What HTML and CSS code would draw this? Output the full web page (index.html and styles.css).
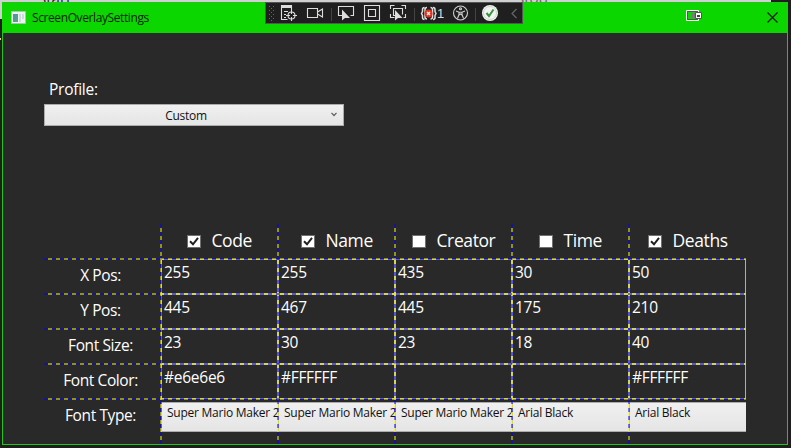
FILE: index.html
```
<!DOCTYPE html>
<html lang="en">
<head>
<meta charset="utf-8">
<title>ScreenOverlaySettings</title>
<link rel="stylesheet" href="styles.css">
</head>
<body>
<div class="behind"><span class="behind-start">Start</span><span class="behind-stop">Stop</span></div>
<main class="window">
  <header class="titlebar">
    <svg class="app-icon" width="15" height="13" viewBox="0 0 15 13"><defs><linearGradient id="ig" x2="1" y2="1"><stop stop-color="#4e8fb0"/><stop offset="1" stop-color="#58a77c"/></linearGradient></defs><path fill="#eef1f1" stroke="#a9c5b2" d="M.5.5h14v12H.5z"/><path fill="url(#ig)" d="M2 3h5v8H2z"/><path fill="#cbdcda" d="M8 3h2v8H8zM11 3h2v5h-2z"/></svg>
    <h1 class="title">ScreenOverlaySettings</h1>
    <svg class="battery" width="16" height="11" viewBox="0 0 16 11"><path fill="#0cd600" stroke="#fff" d="M.5.5h12v10H.5z"/><path fill="none" stroke="#555" d="M1.5 1.500h10v8h-10z"/><path fill="#777" d="M6 3h1v5H6zM8 3h1v5H8z"/><path fill="#fff" stroke="#555" d="M9.500 2.500h6v6h-6z"/><path fill="#444" d="M11 5h3v2h-3z"/></svg>
    <svg class="close" width="11" height="11" viewBox="0 0 11 11"><path stroke="#111" stroke-width="1.1" d="M.5.500l10 10M10.500.500l-10 10"/></svg>
  </header>
  <section class="content">
    <div class="profile">Profile:</div>
    <div class="select"><span>Custom</span><svg width="6" height="5" viewBox="0 0 6 5"><path fill="none" stroke="#606060" stroke-width="1.200" d="M.5.800L3 3.500 5.500.800"/></svg></div>
    <div class="grid">
      <div></div>
      <div class="head code"><i class="box"><svg viewBox="0 0 12 11"><path d="M2 5.300l3 3 5-6.500"/></svg></i><b>Code</b></div>
      <div class="head name"><i class="box"><svg viewBox="0 0 12 11"><path d="M2 5.300l3 3 5-6.500"/></svg></i><b>Name</b></div>
      <div class="head creator"><i class="box"></i><b>Creator</b></div>
      <div class="head time"><i class="box"></i><b>Time</b></div>
      <div class="head deaths"><i class="box"><svg viewBox="0 0 12 11"><path d="M2 5.300l3 3 5-6.500"/></svg></i><b>Deaths</b></div>
      <div class="label">X Pos:</div><div class="cell">255</div><div class="cell">255</div><div class="cell">435</div><div class="cell">30</div><div class="cell">50</div>
      <div class="label">Y Pos:</div><div class="cell">445</div><div class="cell">467</div><div class="cell">445</div><div class="cell">175</div><div class="cell">210</div>
      <div class="label">Font Size:</div><div class="cell">23</div><div class="cell">30</div><div class="cell">23</div><div class="cell">18</div><div class="cell">40</div>
      <div class="label">Font Color:</div><div class="cell">#e6e6e6</div><div class="cell hex">#FFFFFF</div><div class="cell"></div><div class="cell"></div><div class="cell hex">#FFFFFF</div>
      <div class="label">Font Type:</div><div class="combo">Super Mario Maker 2</div><div class="combo">Super Mario Maker 2</div><div class="combo">Super Mario Maker 2</div><div class="combo">Arial Black</div><div class="combo">Arial Black</div>
    </div>
  </section>
</main>
<nav class="tools">
<svg width="258" height="22" viewBox="265 2 258 22">
  <path fill="#666" d="M269 6h1v1h-1zM273 6h1v1h-1zM271 8h1v1h-1zM269 10h1v1h-1zM273 10h1v1h-1zM271 12h1v1h-1zM269 14h1v1h-1zM273 14h1v1h-1zM271 16h1v1h-1zM269 18h1v1h-1zM273 18h1v1h-1zM271 20h1v1h-1z"/>
  <g fill="none" stroke="#ddd" stroke-width="1.100">
    <path d="M281.500 8v11.500h6M291.500 8v2M284 11.500h4M284 14.500h2M284 17.500h2"/><path fill="#ddd" d="M281.500 5.500h10v2h-10z"/>
    <circle cx="291.500" cy="15.500" r="3.500"/><path d="M291.500 10v4M291.500 17v4M286 15.500h4M293 15.500h4"/>
    <path d="M307.500 8.500h10v9h-10zM317.500 12l5-3v8l-5-3"/>
    <path d="M342 15.500h-3.500v-9h15v9h-3"/>
    <path d="M364.500 5.500h15v15h-15zM368.500 9.500h7v7h-7z"/>
    <path d="M390.500 9V5.500h4M401.500 5.500h4V9M390.500 14v3.500h4M405.500 14v3.500h-2M396 15.500h-2.500v-7h9v6"/>
  </g>
  <path fill="#ddd" d="M342 9.500v11l3-2.500h5zM395 10v10.500l3-2.500h4.500z"/>
  <path stroke="#444" d="M331.500 8v13M414.500 8v13M475.500 8v13"/>
  <path fill="none" stroke="#ddd" stroke-width="1.500" d="M424.500 7.500q-2 0-2 2v2l-1 2 1 2v2q0 2 2 2M427 7.500q-2 0-2 2v7.500q0 2 2 2M430.500 7.500q2 0 2 2v7.500q0 2-2 2M433 7.500q2 0 2 2v2l1 2-1 2v2q0 2-2 2"/>
  <circle cx="428.500" cy="13.500" r="4" fill="#e5311d"/><path stroke="#fff" stroke-width="1.200" d="M427 12l3 3M430 12l-3 3"/>
  <text x="437" y="18" class="count">1</text>
  <g fill="none" stroke="#d0d0d0" stroke-width="1.100"><circle cx="460.500" cy="13" r="7"/><circle cx="460.500" cy="8.800" r="1"/><path d="M456 11l3 1.200h3l3-1.200M459 12v2.500l-1.500 4M462 12v2.500l1.500 4M459 15l1.500-1 1.500 1"/></g>
  <circle cx="490" cy="13" r="8" fill="#f3f3f3"/><circle cx="490" cy="13" r="6.500" fill="none" stroke="#b8d5ba" stroke-width=".8"/><path fill="none" stroke="#36963c" stroke-width="2" d="M486.500 13l2.500 3 4.500-6.500"/>
  <path fill="none" stroke="#666" stroke-width="1.200" d="M516.500 9l-4.500 4.500 4.500 4.500"/>
</svg>
</nav>
</body>
</html>
```

FILE: styles.css
```
* { box-sizing: border-box; }
body {
  margin: 0;
  width: 791px;
  height: 448px;
  overflow: hidden;
  padding: 2px 3px 3px 2px;
  background:
    linear-gradient(#d0d0d0, #d0d0d0) 0 0 / 771px 2px no-repeat,
    linear-gradient(#d0d0d0, #d0d0d0) 0 0 / 2px 19px no-repeat,
    linear-gradient(#f0d080, #f0d080) 0 38px / 1px 2px no-repeat,
    #1f1d1e;
  font-family: "Open Sans", "Noto Sans", sans-serif;
  color: #fff;
}
.behind {
  position: absolute;
  left: 0;
  top: 0;
  width: 791px;
  height: 2px;
  overflow: hidden;
  color: #222;
  font-size: 15px;
  line-height: 16px;
}
.behind span { position: absolute; top: -10px; }
.behind-start { left: 38px; }
.behind-stop { left: 516px; color: #666; }
.window {
  width: 786px;
  height: 443px;
  background: #292929;
  border: 1px solid #1fc71a;
}
.titlebar {
  height: 30px;
  margin: 0 -1px;
  padding-left: 9px;
  display: flex;
  align-items: center;
  background: #0cd600;
}
.app-icon { margin-top: -2px; }
.title {
  margin: -2px 0 0 6px;
  flex: 1;
  font-size: 12px;
  font-weight: 400;
  letter-spacing: -0.4px;
  color: #061a04;
}
.battery { margin: -5px 65px 0 0; }
.close { margin: -2px 10px 0 0; }
.content { padding: 45px 0 0 41px; }
.profile {
  height: 26px;
  padding-left: 5px;
  font-size: 15.5px;
  line-height: 22px;
  letter-spacing: -0.25px;
}
.select {
  width: 300px;
  height: 22px;
  padding: 0 6px 0 16px;
  display: flex;
  align-items: center;
  border: 1px solid #acacac;
  background: linear-gradient(#f0f0f0, #e5e5e5);
  color: #111;
  font-size: 12px;
  letter-spacing: -0.3px;
}
.select span { flex: 1; text-align: center; padding-top: 1px; padding-right: 20px; }
.select svg { margin-top: -2px; }
.grid {
  position: relative;
  width: 702px;
  margin-top: 98px;
  display: grid;
  grid-template-columns: repeat(6, 117px);
  grid-template-rows: repeat(5, 35px) 45px;
}
.grid::after {
  content: "";
  position: absolute;
  inset: 0;
  --dash: #0000ff80 0 4px, #ffff0080 4px 8px;
  --h: repeating-linear-gradient(90deg, var(--dash));
  --v: repeating-linear-gradient(180deg, var(--dash));
  background:
    var(--h) 0 34px / 100% 2px no-repeat,
    var(--h) 0 69px / 100% 2px no-repeat,
    var(--h) 0 104px / 100% 2px no-repeat,
    var(--h) 0 139px / 100% 2px no-repeat,
    var(--h) 0 174px / 100% 2px no-repeat,
    var(--v) 116px 0 / 2px 100% no-repeat,
    var(--v) 233px 0 / 2px 100% no-repeat,
    var(--v) 350px 0 / 2px 100% no-repeat,
    var(--v) 467px 0 / 2px 100% no-repeat,
    var(--v) 584px 0 / 2px 100% no-repeat;
}
.head { display: flex; align-items: flex-start; }
.head b {
  margin-left: 10.5px;
  font-size: 17.5px;
  font-weight: 400;
  line-height: 32px;
  letter-spacing: -0.4px;
}
.code { padding-left: 26px; }
.name { padding-left: 23px; }
.creator { padding-left: 17px; }
.time { padding-left: 27px; }
.deaths { padding-left: 19px; }
.box {
  width: 14px;
  height: 13px;
  margin-top: 11px;
  border: 1px solid #707070;
  background: #fff;
}
.box svg { display: block; width: 12px; height: 11px; fill: none; stroke: #212121; stroke-width: 2; }
.label {
  padding-right: 4px;
  text-align: center;
  font-size: 15.5px;
  line-height: 32px;
  letter-spacing: -0.4px;
}
.cell {
  padding-left: 2px;
  border: 1px solid #abadb3;
  font-size: 15.5px;
  line-height: 24px;
  letter-spacing: -0.25px;
}
.hex { letter-spacing: -0.3px; }
.combo {
  height: 30px;
  margin-top: 3px;
  padding-left: 5px;
  overflow: hidden;
  white-space: nowrap;
  border-top: 1px solid #acacac;
  border-bottom: 1px solid #acacac;
  border-left: 1px solid #acacac;
  background: linear-gradient(#f0f0f0, #e5e5e5);
  color: #111;
  font-size: 12px;
  line-height: 20px;
  letter-spacing: -0.25px;
}
.tools {
  position: absolute;
  left: 265px;
  top: 2px;
  width: 258px;
  height: 22px;
  background: #1f1f1f;
  outline: 1px solid #555;
  outline-offset: -1px;
}
.tools svg { display: block; }
.count { fill: #ddd; font: 13px "Liberation Sans", sans-serif; }
```
